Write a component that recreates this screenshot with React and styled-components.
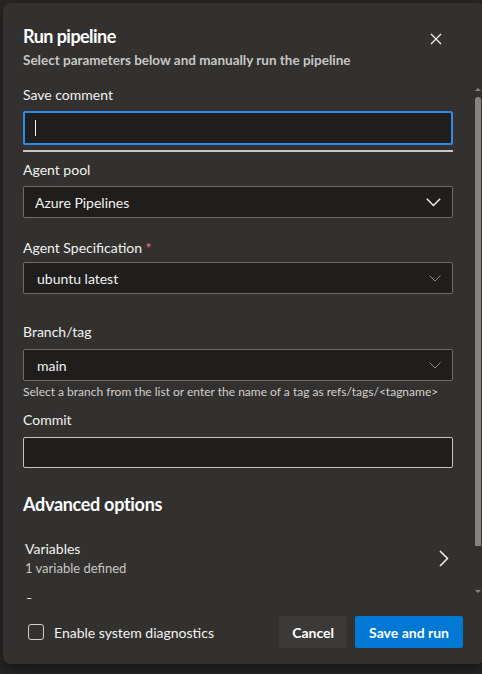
import styled, { createGlobalStyle } from "styled-components";

const GlobalStyle = createGlobalStyle`
    html, body {
        margin: 0;
        padding: 0;
        background-color: #272625;
        overflow: hidden;
    }
    body {
        font-family: "Segoe UI", Lato, "Open Sans", sans-serif;
        color: #f3f2f1;
    }
`;

function CloseIcon() {
    return (
        <svg width="12" height="12" viewBox="0 0 12 12">
            <path d="M1 1 L11 11 M11 1 L1 11" stroke="#f3f2f1" strokeWidth="1.3" fill="none" />
        </svg>
    );
}

function ChevronDown({ dim }) {
    if (dim) {
        return (
            <svg width="12" height="7" viewBox="0 0 12 7">
                <path d="M0.5 0.5 L6 6 L11.5 0.5" stroke="#8a8886" strokeWidth="1" fill="none" />
            </svg>
        );
    }
    return (
        <svg width="15" height="9" viewBox="0 0 15 9">
            <path d="M0.8 0.8 L7.5 7.5 L14.2 0.8" stroke="#f3f2f1" strokeWidth="1.4" fill="none" />
        </svg>
    );
}

function ChevronRight() {
    return (
        <svg width="10" height="17" viewBox="0 0 10 17">
            <path d="M1 1 L8.5 8.5 L1 16" stroke="#f3f2f1" strokeWidth="1.5" fill="none" />
        </svg>
    );
}

function App() {
    return (
        <>
            <GlobalStyle />
            <Page>
                <Panel>
                    <Header>
                        <TitleRow>
                            <Title>Run pipeline</Title>
                            <CloseButton><CloseIcon /></CloseButton>
                        </TitleRow>
                        <Subtitle>Select parameters below and manually run the pipeline</Subtitle>
                    </Header>

                    <ScrollArea>
                        <Field $top={0} $gap={6}>
                            <Label>Save comment</Label>
                            <TextBox $focused><Caret /></TextBox>
                        </Field>
                        <Divider />

                        <Field $top={8} $gap={6}>
                            <Label>Agent pool</Label>
                            <Dropdown $pad={11}>
                                <span>Azure Pipelines</span>
                                <ChevronDown />
                            </Dropdown>
                        </Field>

                        <Field $top={20} $gap={4}>
                            <Label>Agent Specification <Required>*</Required></Label>
                            <Dropdown $pad={13}>
                                <span>ubuntu latest</span>
                                <ChevronDown dim />
                            </Dropdown>
                        </Field>

                        <Field $top={28} $gap={7}>
                            <Label>Branch/tag</Label>
                            <Dropdown $pad={13}>
                                <span>main</span>
                                <ChevronDown dim />
                            </Dropdown>
                            <Helper>Select a branch from the list or enter the name of a tag as refs/tags/&lt;tagname&gt;</Helper>
                        </Field>

                        <Field $top={10} $gap={7}>
                            <Label>Commit</Label>
                            <TextBox />
                        </Field>

                        <SectionTitle>Advanced options</SectionTitle>

                        <OptionRow $top={23}>
                            <div>
                                <OptionName>Variables</OptionName>
                                <OptionValue>1 variable defined</OptionValue>
                            </div>
                            <ChevronRight />
                        </OptionRow>
                        <OptionRow $top={16}>
                            <div>
                                <OptionName>Stages to run</OptionName>
                            </div>
                        </OptionRow>

                        <Scrollbar>
                            <ArrowUp />
                            <Thumb />
                            <ArrowDown />
                        </Scrollbar>
                    </ScrollArea>

                    <Footer>
                        <CheckLabel>
                            <CheckBox />
                            <span>Enable system diagnostics</span>
                        </CheckLabel>
                        <Buttons>
                            <Button>Cancel</Button>
                            <Button $primary>Save and run</Button>
                        </Buttons>
                    </Footer>
                </Panel>
            </Page>
        </>
    );
}

export default App;

const Page = styled.div`
    height: 674px;
    padding: 3px 0 0 3px;
    box-sizing: border-box;
`;

const Panel = styled.div`
    width: 482px;
    height: 661px;
    background-color: #323130;
    border-radius: 8px;
    display: flex;
    flex-direction: column;
    box-shadow: 0 6px 14px rgba(0, 0, 0, 0.45);
    overflow: hidden;
`;

const Header = styled.div`
    padding: 21px 37px 0 20px;
`;

const TitleRow = styled.div`
    display: flex;
    justify-content: space-between;
    align-items: flex-start;
    height: 24px;
`;

const Title = styled.h1`
    margin: 0;
    font-size: 18px;
    line-height: 24px;
    font-weight: 700;
    letter-spacing: -0.55px;
    color: #ffffff;
`;

const CloseButton = styled.div`
    width: 24px;
    height: 24px;
    margin: 3px 0 -3px;
    display: flex;
    align-items: center;
    justify-content: center;
`;

const Subtitle = styled.p`
    margin: 4px 0 0;
    font-size: 13.5px;
    line-height: 16px;
    font-weight: 700;
    color: #c8c6c4;
`;

const ScrollArea = styled.div`
    flex: 1;
    position: relative;
    overflow: hidden;
    padding: 17px 32px 0 20px;
`;

const Field = styled.div`
    margin-top: ${p => p.$top}px;
    display: flex;
    flex-direction: column;
    > div:first-of-type {
        margin-top: ${p => p.$gap}px;
    }
`;

const Label = styled.label`
    font-size: 14px;
    line-height: 20px;
    color: #f3f2f1;
`;

const Required = styled.span`
    color: #f1707b;
`;

const TextBox = styled.div`
    box-sizing: border-box;
    height: ${p => (p.$focused ? 34 : 31)}px;
    background-color: #1f1e1d;
    border: ${p => (p.$focused ? "2px solid #2f8ae4" : "1px solid #c8c6c4")};
    border-radius: 2px;
    display: flex;
    align-items: center;
    padding-left: 10px;
`;

const Caret = styled.span`
    width: 1px;
    height: 16px;
    background-color: #f3f2f1;
`;

const Divider = styled.div`
    margin-top: 5px;
    height: 2px;
    background-color: #c8c6c4;
`;

const Dropdown = styled.div`
    box-sizing: border-box;
    height: 32px;
    background-color: #1f1e1d;
    border: 1px solid #6e6c6a;
    border-radius: 2px;
    display: flex;
    align-items: center;
    justify-content: space-between;
    padding: 0 11px 0 ${p => p.$pad}px;
    font-size: 14px;
    color: #f3f2f1;
`;

const Helper = styled.div`
    margin-top: 3px;
    font-size: 12px;
    line-height: 16px;
    color: #d2d0ce;
`;

const SectionTitle = styled.h2`
    margin: 24px 0 0;
    font-size: 18px;
    line-height: 24px;
    font-weight: 700;
    letter-spacing: -0.3px;
    color: #ffffff;
`;

const OptionRow = styled.div`
    margin-top: ${p => p.$top}px;
    padding: 0 4px 0 2px;
    display: flex;
    align-items: center;
    justify-content: space-between;
`;

const OptionName = styled.div`
    font-size: 14px;
    line-height: 20px;
    color: #f3f2f1;
`;

const OptionValue = styled.div`
    font-size: 13px;
    line-height: 18px;
    color: #c8c6c4;
`;

const Scrollbar = styled.div`
    position: absolute;
    top: 20px;
    bottom: 6px;
    right: 4px;
    width: 6px;
    display: flex;
    flex-direction: column;
    align-items: center;
`;

const ArrowUp = styled.div`
    width: 0;
    height: 0;
    border-left: 3px solid transparent;
    border-right: 3px solid transparent;
    border-bottom: 3px solid #8a8886;
`;

const ArrowDown = styled.div`
    margin-top: auto;
    width: 0;
    height: 0;
    border-left: 3px solid transparent;
    border-right: 3px solid transparent;
    border-top: 3px solid #8a8886;
`;

const Thumb = styled.div`
    margin-top: 6px;
    width: 6px;
    height: 449px;
    border-radius: 3px 3px 0 0;
    background-color: #858381;
`;

const Footer = styled.div`
    display: flex;
    align-items: center;
    padding: 17px 22px 16px 25px;
`;

const CheckLabel = styled.label`
    display: flex;
    align-items: center;
    gap: 10px;
    font-size: 14px;
    color: #f3f2f1;
`;

const CheckBox = styled.span`
    box-sizing: border-box;
    width: 16px;
    height: 16px;
    border: 1px solid #d2d0ce;
    border-radius: 3px;
`;

const Buttons = styled.div`
    margin-left: auto;
    display: flex;
    gap: 8px;
`;

const Button = styled.button`
    height: 32px;
    padding: 0 ${p => (p.$primary ? 14 : 13)}px;
    border: none;
    border-radius: 2px;
    font-family: inherit;
    font-size: 14px;
    font-weight: 700;
    color: #ffffff;
    background-color: ${p => (p.$primary ? "#0078d4" : "#3b3a39")};
`;
